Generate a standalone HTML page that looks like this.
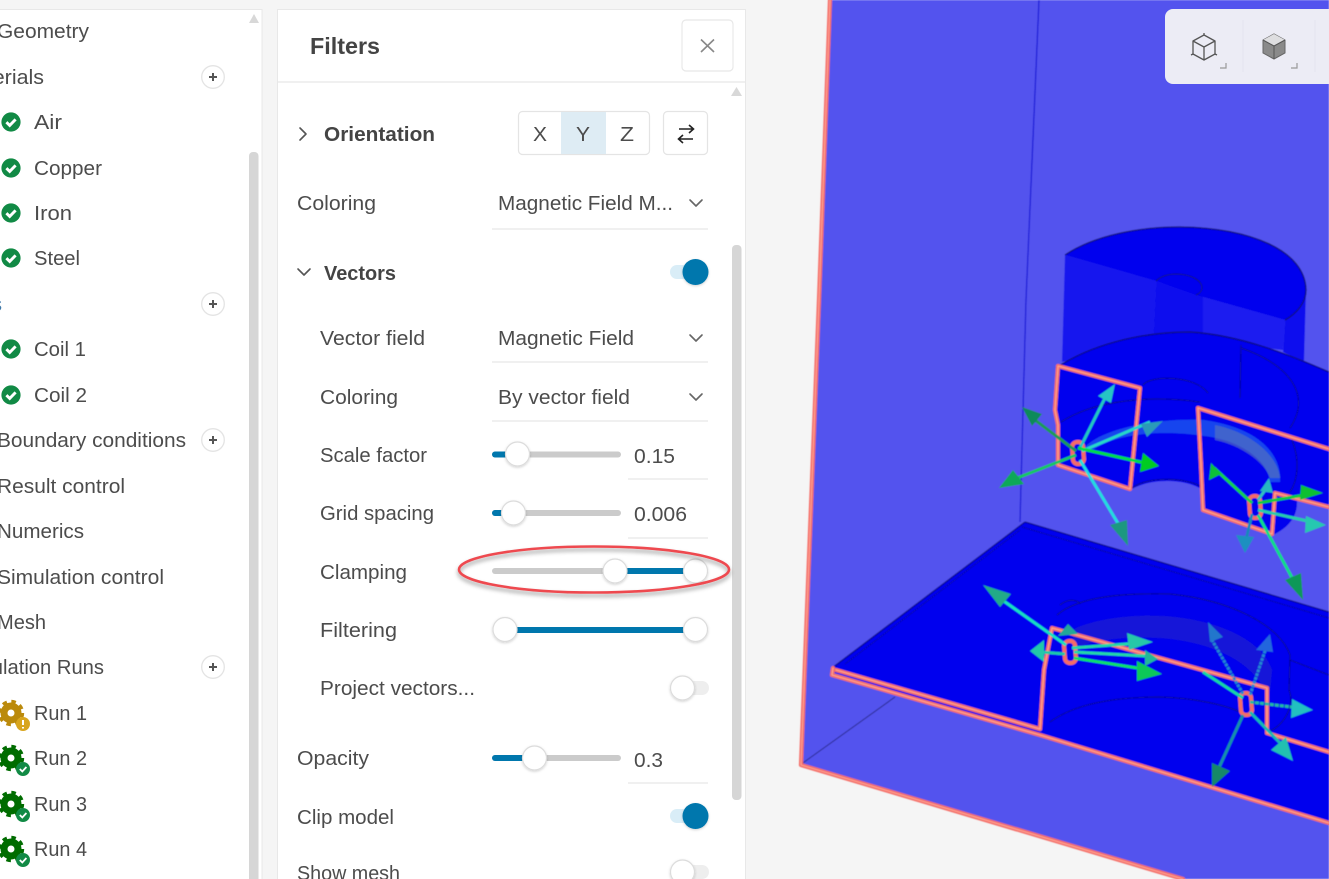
<!DOCTYPE html>
<html lang="en">
<head>
<meta charset="utf-8">
<title>Filters</title>
<style>
html,body{margin:0;padding:0;width:1329px;height:879px;overflow:hidden;background:#f5f5f5}
svg{display:block;position:absolute;left:0;top:0;filter:blur(.35px)}
text{font-family:"Liberation Sans",Arial,sans-serif;font-size:20px;fill:#4c4c4c}
.b{font-weight:700;fill:#444}
.s{fill:none;stroke:#f46c66;stroke-width:4.2;stroke-linejoin:round;stroke-linecap:round}
.s2{fill:none;stroke:#ffa496;stroke-width:1.1;stroke-linejoin:round;stroke-linecap:round}
.n{fill:none;stroke:#08089a;stroke-width:1.2}
.t{fill:#fff;stroke:#dcdcdc;stroke-width:1.2;filter:url(#ts)}
.u{stroke:#e6e6e6;stroke-width:1.2}
.c{fill:none;stroke:#666;stroke-width:1.6;stroke-linecap:round;stroke-linejoin:round}
</style>
</head>
<body>
<svg width="1329" height="879" viewBox="0 0 1329 879" xmlns="http://www.w3.org/2000/svg">
<defs>
<filter id="ts" x="-40%" y="-40%" width="180%" height="180%"><feDropShadow dx="0" dy="1" stdDeviation="1.2" flood-color="#000" flood-opacity=".18"/></filter>
<filter id="as" x="-5%" y="-30%" width="110%" height="170%"><feDropShadow dx="0" dy="3" stdDeviation="2" flood-color="#000" flood-opacity=".4"/></filter>
<filter id="bl" x="-2%" y="-2%" width="104%" height="104%"><feGaussianBlur stdDeviation=".6"/></filter>
<g id="ok"><circle r="9.6" fill="#118a45"/><path d="M-4.6,.2 L-1.3,3.4 L4.6,-2.6" fill="none" stroke="#fff" stroke-width="2.9"/></g>
<g id="gear"><circle r="7" fill="none" stroke="currentColor" stroke-width="7"/><circle r="11" fill="none" stroke="currentColor" stroke-width="4.4" stroke-dasharray="4.32 4.32"/></g>
<g id="plus"><circle r="11.3" fill="#fff" stroke="#e4e4e4" stroke-width="1.3"/><path d="M-4,0H4M0,-4V4" stroke="#555" stroke-width="2"/></g>
</defs>

<!-- page -->
<rect width="1329" height="879" fill="#f5f5f5"/>

<!-- 3D scene -->
<g filter="url(#bl)">
<polygon points="830,0 1329,0 1329,879 1183,879 800,765" fill="#5353ee"/>
<path d="M1039,0 L1026,300 L1020,522" fill="none" stroke="#1a1ad8" stroke-width="1.3"/>
<path d="M800,765 L895,697" fill="none" stroke="#2a2a90" stroke-width="1"/>

<!-- upper cylinder -->
<polygon points="1065,255 1156,281 1153,340 1062,362" fill="#1616ee"/>
<polygon points="1156,281 1203,296 1203,340 1153,340" fill="#0a0aee"/>
<polygon points="1203,297 1285,320 1283,350 1203,340" fill="#1a1af0"/>
<polygon points="1285,320 1306,290 1304,362 1283,352" fill="#1010ee"/>
<path d="M1065,255 C1095,235 1140,227 1180,227 C1250,228 1305,250 1306,290 C1306,303 1296,314 1285,320 L1196,295 L1156,281 Z" fill="#0606ee"/>
<path d="M1065,255 C1095,235 1140,227 1180,227 C1250,228 1305,250 1306,290 C1306,303 1296,314 1285,320" fill="none" stroke="#10107a" stroke-width="1.3"/>
<path d="M1196,295 C1208,290 1202,275 1177,274 C1167,274 1160,277 1156,281" fill="none" stroke="#10107a" stroke-width="1"/>

<!-- middle piece -->
<path d="M1056,368 C1090,345 1140,332 1190,332 C1240,335 1290,355 1329,372 L1329,507 L1297,500 C1298,515 1290,527 1273,535 L1203,510 L1203,490 C1185,478 1150,478 1130,490 L1058,465 Z" fill="#0000ee"/>
<path d="M1056,368 C1090,345 1140,332 1190,332 C1240,335 1290,355 1329,372" fill="none" stroke="#0a0a88" stroke-width="1.4"/>
<path class="n" d="M1241,345 L1240,398"/>
<path class="n" d="M1143,385 C1150,375 1195,375 1208,393"/>
<path class="n" d="M1241,348 C1290,365 1312,395 1290,428"/>
<path class="n" d="M1061,422 C1095,400 1150,395 1200,402"/>
<path d="M1084,448 C1105,425 1170,418 1204,420 C1260,428 1282,455 1280,482 L1270,482 C1268,460 1240,440 1204,436 C1165,430 1115,432 1090,452 Z" fill="#1a55ee" opacity=".8"/>
<path d="M1215,425 C1250,432 1278,455 1280,478 L1270,478 C1265,462 1240,445 1215,440 Z" fill="#5c78b8" opacity=".6"/>
<path class="n" d="M1132,488 C1150,475 1190,478 1203,488"/>
<path class="n" d="M1292,440 C1300,460 1298,480 1290,492"/>

<!-- lower plate -->
<path d="M1025,522 L1329,612 L1329,823 L1040,735 L832,672 L832,668 Z" fill="#0000ee"/>
<path d="M1025,522 L1329,612" fill="none" stroke="#0a0a90" stroke-width="1.3"/>
<path d="M1022,527 L1329,618" fill="none" stroke="#0808b0" stroke-width="1"/>
<path d="M1025,522 L832,668" fill="none" stroke="#0a0a90" stroke-width="1.3"/>
<path d="M1020,530 L845,664" fill="none" stroke="#0808b0" stroke-width="1"/>
<path class="n" d="M1057,615 C1080,595 1130,593 1170,594 C1230,600 1280,625 1290,655 L1289,690"/>
<path class="n" d="M1060,605 C1068,598 1078,600 1080,604"/>
<path d="M1072,630 C1095,618 1140,613 1175,617 C1220,622 1262,640 1272,670 L1270,692 L1262,685 C1240,650 1190,640 1160,638 C1125,636 1095,640 1075,648 Z" fill="#2020d0" opacity=".75"/>
<path class="n" d="M1050,722 C1080,700 1130,697 1160,697 C1195,698 1225,705 1240,712"/>
<path class="n" d="M1290,660 L1329,675"/>
<path class="n" d="M1289,690 C1295,705 1285,725 1268,732"/>

<!-- red outlines -->
<g>
<path class="s" d="M830,0 L819,300 L801,765 L1183,879"/>
<path class="s" d="M1058,366 L1140,388 L1130,489 L1058,465 L1058,425 L1055,410 Z"/>
<path class="s" d="M1198,408 L1329,449"/>
<path class="s" d="M1198,408 L1201,465 L1203,510 L1272,534 L1275,493 L1329,507"/>
<path class="s" d="M833,668 L832,675 L1040,735 L1329,823"/>
<path class="s" d="M836,670 L1040,729 L1044,670 L1052,628 L1267,688 L1267,733 L1329,752"/>
<rect class="s" x="-5.5" y="-11" width="11" height="22" rx="5" transform="translate(1078,453) rotate(-4)"/>
<rect class="s" x="-5.5" y="-11" width="11" height="22" rx="5" transform="translate(1255,507) rotate(-4)"/>
<rect class="s" x="-5.5" y="-11" width="11" height="22" rx="5" transform="translate(1070,652) rotate(-4)"/>
<rect class="s" x="-5.5" y="-11" width="11" height="22" rx="5" transform="translate(1246,704) rotate(-4)"/>
<path class="s2" d="M830,0 L819,300 L801,765 L1183,879"/>
<path class="s2" d="M1058,366 L1140,388 L1130,489 L1058,465 L1058,425 L1055,410 Z"/>
<path class="s2" d="M1198,408 L1329,449"/>
<path class="s2" d="M1198,408 L1201,465 L1203,510 L1272,534 L1275,493 L1329,507"/>
<path class="s2" d="M833,668 L832,675 L1040,735 L1329,823"/>
<path class="s2" d="M836,670 L1040,729 L1044,670 L1052,628 L1267,688 L1267,733 L1329,752"/>
</g>

<!-- arrows : upper left -->
<g fill="none" stroke-width="3">
<path d="M1076,451 L1035,420" stroke="#1a9a55"/>
<path d="M1080,448 L1106,396" stroke="#22c8c0"/>
<path d="M1082,451 L1150,422" stroke="#28d8c8"/>
<path d="M1078,448 L1145,463" stroke="#00dd44"/>
<path d="M1076,455 L1012,480" stroke="#18c860"/>
<path d="M1080,460 L1122,530" stroke="#22dde0"/>
</g>
<polygon points="1022,407 1032,426 1042,414" fill="#118a5a"/>
<polygon points="1115,384 1098,396 1111,403" fill="#28c4c4"/>
<polygon points="1163,421 1141,424 1147,437" fill="#2a9ab8"/>
<polygon points="1159,466 1143,453 1140,472" fill="#00cc22"/>
<polygon points="999,488 1013,470 1024,484" fill="#0aa858"/>
<polygon points="1128,546 1110,525 1127,520" fill="#1e9880"/>

<!-- arrows : upper right -->
<g fill="none" stroke-width="3">
<path d="M1252,503 L1214,468" stroke="#18d048"/>
<path d="M1258,500 L1268,486" stroke="#30c0c0"/>
<path d="M1258,503 L1310,494" stroke="#10cc40"/>
<path d="M1258,510 L1312,522" stroke="#28ccaa"/>
<path d="M1252,514 L1246,540" stroke="#1888bb"/>
<path d="M1258,515 L1296,585" stroke="#10dd88"/>
</g>
<polygon points="1211,463 1209,480 1221,474" fill="#0cc038"/>
<polygon points="1269,478 1260,491 1273,493" fill="#28b8c0"/>
<polygon points="1323,493 1301,485 1300,500" fill="#08c030"/>
<polygon points="1326,525 1306,516 1305,533" fill="#28c8b0"/>
<polygon points="1245,553 1236,535 1254,537" fill="#1a90c0"/>
<polygon points="1303,600 1285,580 1301,573" fill="#109858"/>

<!-- arrows : lower left -->
<g fill="none" stroke-width="3">
<path d="M1066,645 L998,597" stroke="#18e0c0"/>
<path d="M1065,654 L1040,652" stroke="#1ec8a8"/>
<path d="M1072,648 L1140,643" stroke="#22d8a8"/>
<path d="M1074,658 L1150,670" stroke="#08e068"/>
<path d="M1074,652 L1145,656" stroke="#22d8a8"/>
</g>
<polygon points="983,585 1000,607 1011,594" fill="#22aa88"/>
<polygon points="1030,651 1044,640 1044,662" fill="#22c8a8"/>
<polygon points="1068,624 1058,636 1078,634" fill="#22a898"/>
<polygon points="1153,642 1127,633 1129,650" fill="#28c8a8"/>
<polygon points="1162,674 1137,661 1137,681" fill="#08c858"/>
<polygon points="1158,659 1145,650 1145,666" fill="#22b898"/>

<!-- arrows : lower right -->
<g fill="none" stroke-width="3">
<path d="M1243,694 L1212,640" stroke="#2288cc" stroke-dasharray="3 1"/>
<path d="M1250,695 L1266,648" stroke="#2288d0" stroke-dasharray="3 1"/>
<path d="M1250,702 L1300,708" stroke="#20b8a0" stroke-dasharray="4 1"/>
<path d="M1250,712 L1285,748" stroke="#18b8b0"/>
<path d="M1243,715 L1217,772" stroke="#1890a8"/>
<path d="M1203,672 L1243,698" stroke="#18d8a0"/>
</g>
<polygon points="1208,622 1210,642 1223,637" fill="#2277cc"/>
<polygon points="1270,634 1256,650 1273,652" fill="#2266dd"/>
<polygon points="1313,710 1292,699 1291,718" fill="#22c0c0"/>
<polygon points="1293,761 1271,750 1286,737" fill="#20c0b0"/>
<polygon points="1212,787 1212,763 1230,771" fill="#168868"/>
</g>

<!-- view toolbar -->
<rect x="1165" y="9" width="180" height="75" rx="8" fill="#ececf5"/>
<path d="M1243,20V72M1315,20V72" stroke="#e4e4ee" stroke-width="1"/>
<g fill="none" stroke="#555" stroke-width="1.3" stroke-linejoin="round">
<path d="M1204,35 L1215,41 L1215,54 L1204,60 L1193,54 L1193,41 Z M1193,41 L1204,47 L1215,41 M1204,47 V60"/>
<path d="M1204,33V35M1191,55l2,-1M1217,55l-2,-1"/>
</g>
<path d="M1274,34 L1285,40 L1285,53 L1274,59 L1263,53 L1263,40 Z" fill="#8a8a8a" stroke="#666" stroke-width="1"/>
<path d="M1274,34 L1285,40 L1274,46 L1263,40 Z" fill="#dedee0"/>
<path d="M1263,40 L1274,46 L1285,40 M1274,46 V59" fill="none" stroke="#555" stroke-width="1"/>
<path d="M1220,68H1226V63M1291,68H1297V63" fill="none" stroke="#999" stroke-width="1.2"/>

<!-- left panel -->
<rect x="-2" y="9.5" width="264" height="875" fill="#fff" stroke="#e8e8e8"/>
<polygon points="254,14 249,23 259,23" fill="#d8d8d8"/>
<rect x="249" y="152" width="9.5" height="740" rx="4" fill="#d6d6d6"/>
<text x="-3" y="38" textLength="92" lengthAdjust="spacingAndGlyphs">Geometry</text>
<text x="-43" y="84" textLength="87" lengthAdjust="spacingAndGlyphs">Materials</text>
<text x="34" y="129" textLength="28" lengthAdjust="spacingAndGlyphs">Air</text>
<text x="34" y="175" textLength="68" lengthAdjust="spacingAndGlyphs">Copper</text>
<text x="34" y="220" textLength="38" lengthAdjust="spacingAndGlyphs">Iron</text>
<text x="34" y="265" textLength="46" lengthAdjust="spacingAndGlyphs">Steel</text>
<text x="-46" y="311" textLength="48" lengthAdjust="spacingAndGlyphs" style="fill:#3f78a8">Coils</text>
<text x="34" y="356" textLength="52" lengthAdjust="spacingAndGlyphs">Coil 1</text>
<text x="34" y="402" textLength="53" lengthAdjust="spacingAndGlyphs">Coil 2</text>
<text x="-3" y="447" textLength="189" lengthAdjust="spacingAndGlyphs">Boundary conditions</text>
<text x="-3" y="493" textLength="128" lengthAdjust="spacingAndGlyphs">Result control</text>
<text x="-3" y="538" textLength="87" lengthAdjust="spacingAndGlyphs">Numerics</text>
<text x="-3" y="584" textLength="167" lengthAdjust="spacingAndGlyphs">Simulation control</text>
<text x="-3" y="629" textLength="49" lengthAdjust="spacingAndGlyphs">Mesh</text>
<text x="-43" y="674" textLength="147" lengthAdjust="spacingAndGlyphs">Simulation Runs</text>
<text x="34" y="720" textLength="53" lengthAdjust="spacingAndGlyphs">Run 1</text>
<text x="34" y="765" textLength="53" lengthAdjust="spacingAndGlyphs">Run 2</text>
<text x="34" y="811" textLength="53" lengthAdjust="spacingAndGlyphs">Run 3</text>
<text x="34" y="856" textLength="53" lengthAdjust="spacingAndGlyphs">Run 4</text>
<use href="#plus" x="213" y="77"/><use href="#plus" x="213" y="304"/><use href="#plus" x="213" y="440"/><use href="#plus" x="213" y="667"/>
<use href="#ok" x="11" y="122"/><use href="#ok" x="11" y="168"/><use href="#ok" x="11" y="213"/><use href="#ok" x="11" y="258"/>
<use href="#ok" x="11" y="349"/><use href="#ok" x="11" y="395"/>
<use href="#gear" x="11" y="713" color="#bb8a0c"/>
<circle cx="23" cy="724" r="7" fill="#d8a51e"/><path d="M23,720V725M23,727V728.5" stroke="#fff" stroke-width="2"/>
<use href="#gear" x="11" y="758" color="#006c00"/><use href="#gear" x="11" y="804" color="#006c00"/><use href="#gear" x="11" y="849" color="#006c00"/>
<circle cx="23" cy="769" r="7" fill="#118a45"/><path d="M19.8,769 L22.3,771.5 L26.4,767" fill="none" stroke="#fff" stroke-width="1.8"/>
<circle cx="23" cy="815" r="7" fill="#118a45"/><path d="M19.8,815 L22.3,817.5 L26.4,813" fill="none" stroke="#fff" stroke-width="1.8"/>
<circle cx="23" cy="860" r="7" fill="#118a45"/><path d="M19.8,860 L22.3,862.5 L26.4,858" fill="none" stroke="#fff" stroke-width="1.8"/>

<!-- filter panel -->
<rect x="277.5" y="9.5" width="468" height="875" fill="#fff" stroke="#e8e8e8"/>
<path d="M278,82H745" stroke="#e6e6e6" stroke-width="1.3"/>
<text class="b" x="310" y="54" textLength="70" lengthAdjust="spacingAndGlyphs" style="font-size:23px">Filters</text>
<rect x="682" y="20" width="51" height="51" rx="4" fill="#fff" stroke="#e8e8e8" stroke-width="1.2"/>
<path d="M701,39.5 L714,52 M714,39.5 L701,52" stroke="#888" stroke-width="1.6" fill="none"/>
<polygon points="736.5,87 731,96 742,96" fill="#d8d8d8"/>
<rect x="732" y="245" width="9.5" height="555" rx="4" fill="#d6d6d6"/>

<path class="c" d="M300,128 L306,134 L300,140" style="stroke:#555"/>
<text class="b" x="324" y="141" textLength="111" lengthAdjust="spacingAndGlyphs">Orientation</text>
<rect x="518.5" y="111.5" width="131" height="43" rx="4" fill="#fff" stroke="#e4e4e4" stroke-width="1.2"/>
<rect x="561" y="112" width="45" height="42" fill="#deecf4"/>
<text x="533" y="141" textLength="14" lengthAdjust="spacingAndGlyphs">X</text>
<text x="576" y="141" textLength="14" lengthAdjust="spacingAndGlyphs">Y</text>
<text x="620" y="141" textLength="14" lengthAdjust="spacingAndGlyphs">Z</text>
<rect x="663.5" y="111.5" width="44" height="43" rx="4" fill="#fff" stroke="#e4e4e4" stroke-width="1.2"/>
<path d="M679,129 H693 M689,125 L693.5,129 L689,133 M693,139 H679 M683,135 L678.5,139 L683,143" fill="none" stroke="#222" stroke-width="1.6"/>

<text x="297" y="210" textLength="79" lengthAdjust="spacingAndGlyphs">Coloring</text>
<text x="498" y="210" textLength="175" lengthAdjust="spacingAndGlyphs">Magnetic Field M...</text>
<path class="c" d="M690,200 L696,206 L702,200"/>
<path class="u" d="M492,229H708"/>

<path class="c" d="M298,269 L304,275 L310,269" style="stroke:#555"/>
<text class="b" x="324" y="280" textLength="72" lengthAdjust="spacingAndGlyphs">Vectors</text>
<rect x="670" y="265" width="30" height="14" rx="7" fill="#d9edf7"/>
<circle cx="695.5" cy="272" r="13" fill="#0077ad" filter="url(#ts)"/>

<text x="320" y="345" textLength="105" lengthAdjust="spacingAndGlyphs">Vector field</text>
<text x="498" y="345" textLength="136" lengthAdjust="spacingAndGlyphs">Magnetic Field</text>
<path class="c" d="M690,335 L696,341 L702,335"/>
<path class="u" d="M492,362H708"/>

<text x="320" y="404" textLength="78" lengthAdjust="spacingAndGlyphs">Coloring</text>
<text x="498" y="404" textLength="132" lengthAdjust="spacingAndGlyphs">By vector field</text>
<path class="c" d="M690,394 L696,400 L702,394"/>
<path class="u" d="M492,421H708"/>

<text x="320" y="462" textLength="107" lengthAdjust="spacingAndGlyphs">Scale factor</text>
<rect x="492" y="451.5" width="129" height="6" rx="3" fill="#cbcbcb"/>
<rect x="492" y="451.5" width="20" height="6" rx="3" fill="#0077ad"/>
<circle class="t" cx="517.5" cy="454" r="12"/>
<text x="634" y="463" textLength="41" lengthAdjust="spacingAndGlyphs">0.15</text>
<path class="u" d="M628,479H708"/>

<text x="320" y="520" textLength="114" lengthAdjust="spacingAndGlyphs">Grid spacing</text>
<rect x="492" y="510" width="129" height="6" rx="3" fill="#cbcbcb"/>
<rect x="492" y="510" width="16" height="6" rx="3" fill="#0077ad"/>
<circle class="t" cx="513.5" cy="513" r="12"/>
<text x="634" y="521" textLength="53" lengthAdjust="spacingAndGlyphs">0.006</text>
<path class="u" d="M628,538H708"/>

<text x="320" y="579" textLength="87" lengthAdjust="spacingAndGlyphs">Clamping</text>
<rect x="492" y="568" width="216" height="6" rx="3" fill="#cbcbcb"/>
<rect x="615" y="568" width="80" height="6" fill="#0077ad"/>
<circle class="t" cx="615" cy="571" r="12"/>
<circle class="t" cx="695.5" cy="571" r="12"/>

<text x="320" y="637" textLength="77" lengthAdjust="spacingAndGlyphs">Filtering</text>
<rect x="505" y="627" width="190" height="6" fill="#0077ad"/>
<circle class="t" cx="505" cy="629.5" r="12"/>
<circle class="t" cx="695.5" cy="629.5" r="12"/>

<text x="320" y="695" textLength="155" lengthAdjust="spacingAndGlyphs">Project vectors...</text>
<rect x="680" y="681" width="29" height="14" rx="7" fill="#eeeeee"/>
<circle class="t" cx="682.5" cy="688" r="12"/>

<text x="297" y="765" textLength="72" lengthAdjust="spacingAndGlyphs">Opacity</text>
<rect x="492" y="755" width="129" height="6" rx="3" fill="#cbcbcb"/>
<rect x="492" y="755" width="40" height="6" rx="3" fill="#0077ad"/>
<circle class="t" cx="534.5" cy="758" r="12"/>
<text x="634" y="767" textLength="29" lengthAdjust="spacingAndGlyphs">0.3</text>
<path class="u" d="M628,783H708"/>

<text x="297" y="824" textLength="97" lengthAdjust="spacingAndGlyphs">Clip model</text>
<rect x="670" y="809" width="30" height="14" rx="7" fill="#d9edf7"/>
<circle cx="695.5" cy="816" r="13" fill="#0077ad" filter="url(#ts)"/>

<text x="297" y="880" textLength="103" lengthAdjust="spacingAndGlyphs">Show mesh</text>
<rect x="680" y="865" width="29" height="14" rx="7" fill="#eeeeee"/>
<circle class="t" cx="682.5" cy="872" r="12"/>

<!-- annotation -->
<ellipse cx="594" cy="569.5" rx="135" ry="23" fill="none" stroke="#ee4a50" stroke-width="2.6" filter="url(#as)"/>
</svg>
</body>
</html>
